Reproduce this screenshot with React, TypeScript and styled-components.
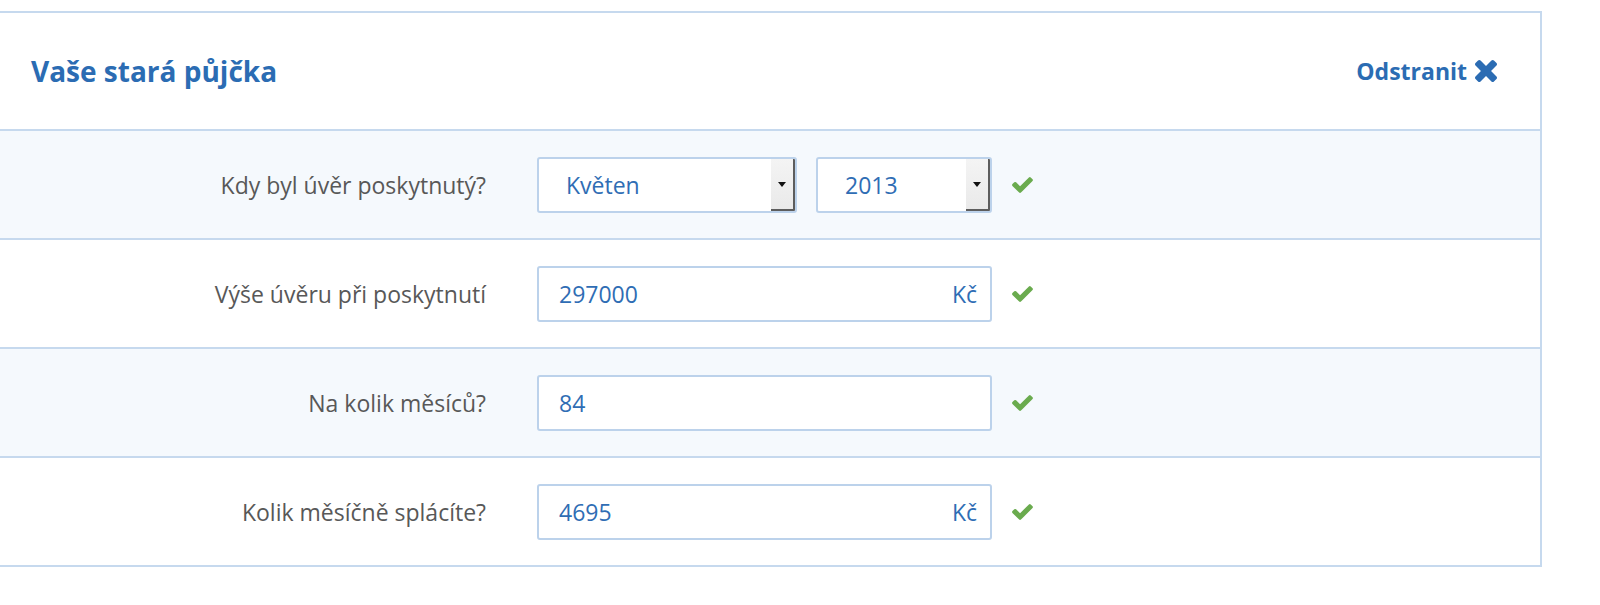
import React from "react";
import styled, { createGlobalStyle } from "styled-components";

const palette = {
  blue: "#2b6cb3",
  value: "#2f6db4",
  label: "#585858",
  line: "#c6d9ee",
  stripe: "#f5f9fd",
  fieldBorder: "#bcd2eb",
  green: "#6aab4e",
};

const GlobalStyle = createGlobalStyle`
  body {
    margin: 0;
    background: #ffffff;
    font-family: "Open Sans", "Liberation Sans", sans-serif;
  }
`;

const Page = styled.div`
  padding-top: 11px;
`;

const Panel = styled.section`
  width: 1540px;
  border: 2px solid ${palette.line};
  border-left: none;
  background: #ffffff;
`;

const Header = styled.header`
  display: flex;
  align-items: center;
  justify-content: space-between;
  height: 116px;
  padding: 0 43px 0 31px;
  border-bottom: 2px solid ${palette.line};
`;

const Title = styled.h2`
  margin: 0;
  font-size: 28px;
  font-weight: 700;
  color: ${palette.blue};
`;

const RemoveLink = styled.a`
  display: flex;
  align-items: center;
  gap: 8px;
  font-size: 23px;
  font-weight: 700;
  color: ${palette.blue};
  cursor: pointer;
  text-decoration: none;

  svg {
    width: 22px;
    height: 22px;
    fill: ${palette.blue};
  }
`;

const Row = styled.div<{ $striped?: boolean }>`
  display: flex;
  align-items: center;
  height: 107px;
  background: ${(p) => (p.$striped ? palette.stripe : "#ffffff")};
  border-bottom: 2px solid ${palette.line};

  &:last-child {
    border-bottom: none;
  }
`;

const Label = styled.div`
  flex: 0 0 486px;
  text-align: right;
  font-size: 23px;
  color: ${palette.label};
`;

const Fields = styled.div`
  display: flex;
  gap: 19px;
  margin-left: 51px;
  width: 455px;
`;

const Box = styled.div<{ $width?: number }>`
  box-sizing: border-box;
  display: flex;
  align-items: center;
  width: ${(p) => (p.$width ? `${p.$width}px` : "100%")};
  height: 56px;
  border: 2px solid ${palette.fieldBorder};
  border-radius: 3px;
  background: #ffffff;
  font-size: 23px;
  color: ${palette.value};
  overflow: hidden;
`;

const Value = styled.span<{ $pad?: number }>`
  flex: 1;
  padding-left: ${(p) => p.$pad ?? 20}px;
`;

const Unit = styled.span`
  padding-right: 13px;
`;

const SelectArrow = styled.span`
  position: relative;
  align-self: stretch;
  width: 24px;
  background: linear-gradient(#f4f4f4, #e9e9e9);
  box-shadow: inset -2px -2px 0 #5d5d5d;

  &::after {
    content: "";
    position: absolute;
    left: 7px;
    top: 50%;
    margin-top: -3px;
    border-left: 4px solid transparent;
    border-right: 4px solid transparent;
    border-top: 5px solid #111;
  }
`;

const Check = styled.span`
  display: flex;
  margin-left: 20px;

  svg {
    width: 21px;
    height: 16px;
    fill: ${palette.green};
  }
`;

const CloseIcon = () => (
  <svg viewBox="302 366 1188 1188">
    <path d="M1490 1322q0 40-28 68l-136 136q-28 28-68 28t-68-28l-294-294-294 294q-28 28-68 28t-68-28l-136-136q-28-28-28-68t28-68l294-294-294-294q-28-28-28-68t28-68l136-136q28-28 68-28t68 28l294 294 294-294q28-28 68-28t68 28l136 136q28 28 28 68t-28 68l-294 294 294 294q28 28 28 68z" />
  </svg>
);

const CheckIcon = () => (
  <Check>
    <svg viewBox="121 334 1550 1188">
      <path d="M1671 566q0 40-28 68l-724 724-136 136q-28 28-68 28t-68-28l-136-136-362-362q-28-28-28-68t28-68l136-136q28-28 68-28t68 28l294 295 656-657q28-28 68-28t68 28l136 136q28 28 28 68z" />
    </svg>
  </Check>
);

const Select = ({ value, width }: { value: string; width: number }) => (
  <Box $width={width}>
    <Value $pad={27}>{value}</Value>
    <SelectArrow />
  </Box>
);

const TextField = ({ value, unit }: { value: string; unit?: string }) => (
  <Box>
    <Value>{value}</Value>
    {unit && <Unit>{unit}</Unit>}
  </Box>
);

const App = () => {
  return (
    <Page>
      <GlobalStyle />
      <Panel>
        <Header>
          <Title>Vaše stará půjčka</Title>
          <RemoveLink>
            Odstranit
            <CloseIcon />
          </RemoveLink>
        </Header>

        <Row $striped>
          <Label>Kdy byl úvěr poskytnutý?</Label>
          <Fields>
            <Select value="Květen" width={260} />
            <Select value="2013" width={176} />
          </Fields>
          <CheckIcon />
        </Row>

        <Row>
          <Label>Výše úvěru při poskytnutí</Label>
          <Fields>
            <TextField value="297000" unit="Kč" />
          </Fields>
          <CheckIcon />
        </Row>

        <Row $striped>
          <Label>Na kolik měsíců?</Label>
          <Fields>
            <TextField value="84" />
          </Fields>
          <CheckIcon />
        </Row>

        <Row>
          <Label>Kolik měsíčně splácíte?</Label>
          <Fields>
            <TextField value="4695" unit="Kč" />
          </Fields>
          <CheckIcon />
        </Row>
      </Panel>
    </Page>
  );
};

export default App;
